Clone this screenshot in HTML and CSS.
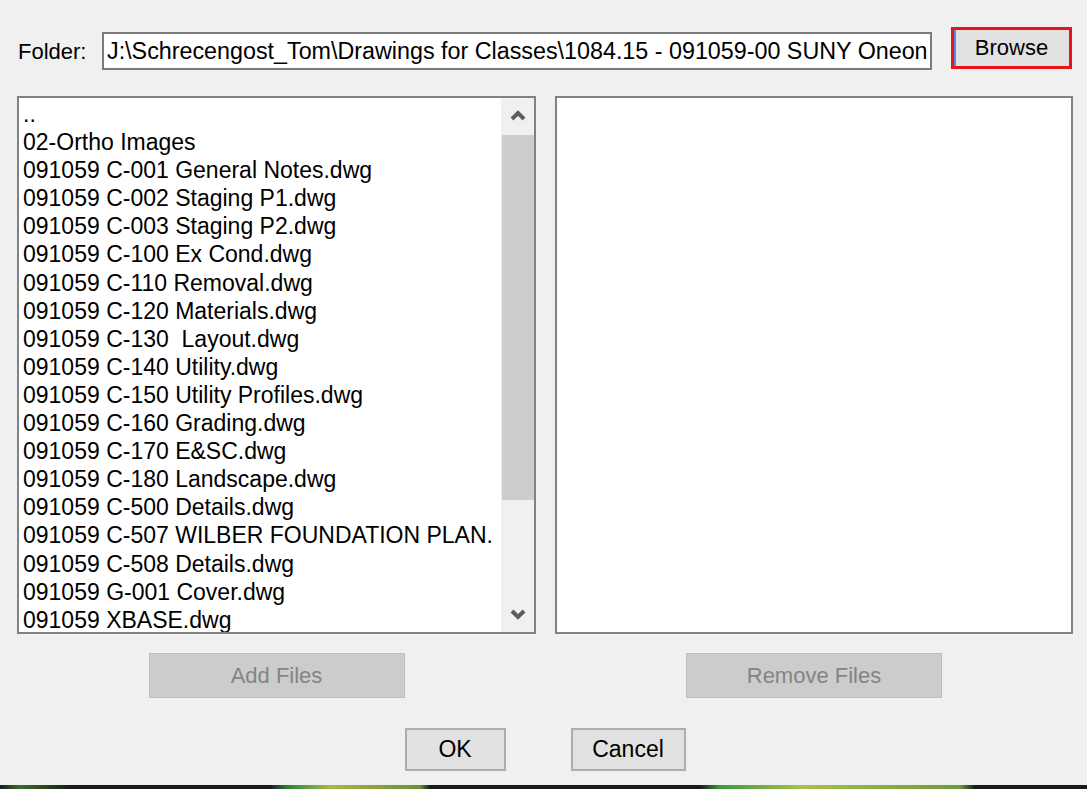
FILE: index.html
```html
<!DOCTYPE html>
<html lang="en">
<head>
    <meta charset="UTF-8">
    <title>Select Drawings</title>
    <link rel="stylesheet" href="styles.css">
</head>
<body>

    <div class="dialog">

        <div class="folderRow">
            <span class="folderLabel">Folder:</span>
            <div class="pathBox">J:\Schrecengost_Tom\Drawings for Classes\1084.15 - 091059-00 SUNY Oneon</div>
            <button class="btnBrowse">Browse</button>
        </div>

        <div class="lists">
            <div class="listBox listLeft">
                <div class="listItems">
                    <div>..</div>
                    <div>02-Ortho Images</div>
                    <div>091059 C-001 General Notes.dwg</div>
                    <div>091059 C-002 Staging P1.dwg</div>
                    <div>091059 C-003 Staging P2.dwg</div>
                    <div>091059 C-100 Ex Cond.dwg</div>
                    <div>091059 C-110 Removal.dwg</div>
                    <div>091059 C-120 Materials.dwg</div>
                    <div>091059 C-130 &nbsp;Layout.dwg</div>
                    <div>091059 C-140 Utility.dwg</div>
                    <div>091059 C-150 Utility Profiles.dwg</div>
                    <div>091059 C-160 Grading.dwg</div>
                    <div>091059 C-170 E&amp;SC.dwg</div>
                    <div>091059 C-180 Landscape.dwg</div>
                    <div>091059 C-500 Details.dwg</div>
                    <div>091059 C-507 WILBER FOUNDATION PLAN.</div>
                    <div>091059 C-508 Details.dwg</div>
                    <div>091059 G-001 Cover.dwg</div>
                    <div>091059 XBASE.dwg</div>
                </div>
                <div class="scrollBar">
                    <div class="scrollArrow">
                        <svg width="16" height="11" viewBox="0 0 16 11"><polyline points="2,9 8,3 14,9" fill="none" stroke="#5c5c5c" stroke-width="4"/></svg>
                    </div>
                    <div class="scrollThumb"></div>
                    <div class="scrollTrack"></div>
                    <div class="scrollArrow">
                        <svg width="16" height="11" viewBox="0 0 16 11"><polyline points="2,2 8,8 14,2" fill="none" stroke="#5c5c5c" stroke-width="4"/></svg>
                    </div>
                </div>
            </div>
            <div class="listBox listRight"></div>
        </div>

        <div class="actions">
            <div class="actionCell cellLeft">
                <button class="btnDisabled">Add Files</button>
            </div>
            <div class="actionCell cellRight">
                <button class="btnDisabled">Remove Files</button>
            </div>
        </div>

        <div class="dialogButtons">
            <button class="btnDialog btnOk">OK</button>
            <button class="btnDialog btnCancel">Cancel</button>
        </div>

    </div>

    <div class="taskStrip"></div>

</body>
</html>
```

FILE: styles.css
```css
body{
    margin: 0;
    width: 1087px;
    height: 789px;
    overflow: hidden;
    background-color: #f0f0f0;
    font-family: "Liberation Sans", Arial, sans-serif;
    color: #000;
}

button{
    font-family: "Liberation Sans", Arial, sans-serif;
    padding: 0;
    margin: 0;
    box-sizing: border-box;
}

.dialog{
    padding: 27px 0 0 17px;
}

/* folder row */

.folderRow{
    display: flex;
    align-items: flex-start;
    height: 44px;
}

.folderLabel{
    font-size: 22px;
    width: 84px;
    margin: 12px 0 0 1px;
}

.pathBox{
    width: 830px;
    height: 38px;
    margin-top: 5px;
    box-sizing: border-box;
    border: 2px solid #7a7a7a;
    background-color: #fff;
    font-size: 23.3px;
    line-height: 34px;
    padding-left: 3px;
    white-space: nowrap;
    overflow: hidden;
}

.btnBrowse{
    width: 121px;
    height: 42px;
    margin-left: 19px;
    border: 3px solid #e8141c;
    background-color: #e1e1e1;
    box-shadow: inset 2px 0 0 #4a90d9;
    font-size: 22px;
    color: #000;
}

/* list boxes */

.lists{
    display: flex;
    gap: 19px;
    margin-top: 25px;
}

.listBox{
    height: 538px;
    box-sizing: border-box;
    border: 2px solid #828282;
    background-color: #fff;
    display: flex;
}

.listLeft{
    width: 519px;
}

.listRight{
    width: 518px;
}

.listItems{
    flex: 1;
    padding: 2px 0 0 4px;
    font-size: 23px;
    line-height: 28.1px;
    white-space: nowrap;
    overflow: hidden;
}

.scrollBar{
    width: 33px;
    background-color: #f0f0f0;
    display: flex;
    flex-direction: column;
}

.scrollArrow{
    height: 35px;
    display: flex;
    align-items: center;
    justify-content: center;
}

.scrollThumb{
    height: 365px;
    margin: 2px 0 0 1px;
    background-color: #cdcdcd;
}

.scrollTrack{
    flex: 1;
}

/* add / remove */

.actions{
    display: flex;
    gap: 19px;
    margin-top: 19px;
}

.actionCell{
    display: flex;
    justify-content: center;
}

.cellLeft{
    width: 519px;
}

.cellRight{
    width: 518px;
}

.btnDisabled{
    width: 256px;
    height: 45px;
    border: 1px solid #bfbfbf;
    background-color: #cccccc;
    color: #848484;
    font-size: 22px;
}

/* ok / cancel */

.dialogButtons{
    display: flex;
    justify-content: center;
    gap: 65px;
    margin-top: 30px;
    padding-right: 14px;
}

.btnDialog{
    height: 43px;
    border: 2px solid #adadad;
    background-color: #e1e1e1;
    font-size: 23px;
    color: #000;
}

.btnOk{
    width: 101px;
}

.btnCancel{
    width: 115px;
}

.taskStrip{
    margin-top: 14px;
    height: 4px;
    background: linear-gradient(to right,
        #1b1b1b 0, #3f6b2a 20px, #1b1b1b 70px,
        #1b1b1b 270px, #2f8a3a 290px, #a8b84a 330px, #6c8f35 420px, #1b1b1b 430px,
        #1b1b1b 700px, #3a9a3c 720px, #a9c04e 800px, #6d9b3a 960px, #1b1b1b 975px,
        #1b1b1b 100%);
}
```
